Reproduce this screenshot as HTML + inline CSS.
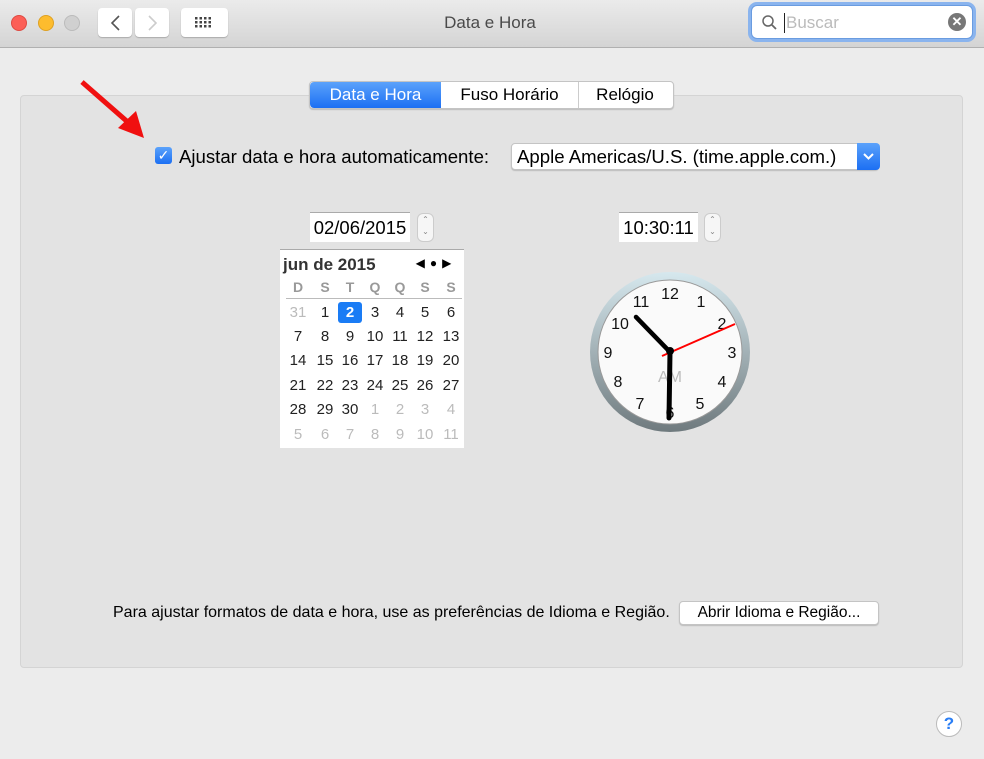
<!DOCTYPE html>
<html><head><style>
body{margin:0;width:984px;height:759px;background:#ececec;font-family:"Liberation Sans",sans-serif;position:relative;overflow:hidden}
.a{position:absolute}
.tb{left:0;top:0;width:984px;height:47px;background:linear-gradient(#ebebeb,#d4d4d4);border-bottom:1px solid #b0b0b0}
.dot{width:14px;height:14px;border-radius:50%;top:15px}
.btn{background:#fff;border-radius:4px;box-shadow:0 1px 1px #aaa;top:8px;height:29px}
.panel{left:20px;top:95px;width:941px;height:571px;background:#e3e3e3;border:1px solid #d4d4d4;border-radius:4px}
.cal div{position:absolute;width:24px;text-align:center;font-size:14px}
.h{color:#999;font-weight:bold}
</style></head><body>
<div class="a tb"></div>
<div class="a dot" style="left:11px;background:#fc5f57;border:1px solid #de4a42"></div>
<div class="a dot" style="left:38px;background:#fdbc2e;border:1px solid #dea123"></div>
<div class="a dot" style="left:64px;background:#d0d0d0;border:1px solid #bbb"></div>
<div class="a btn" style="left:98px;width:34px"></div>
<div class="a btn" style="left:135px;width:34px"></div>
<svg class="a" style="left:98px;top:8px" width="72" height="29"><path d="M21 8 L14 15 L21 22" stroke="#555" stroke-width="1.6" fill="none"/><path d="M51 8 L58 15 L51 22" stroke="#ccc" stroke-width="1.6" fill="none"/></svg>
<div class="a btn" style="left:181px;width:47px"></div>
<svg class="a" style="left:195px;top:17px" width="20" height="12"><g fill="#444"><rect x="0" y="0" width="2.5" height="2.5"/><rect x="4.5" y="0" width="2.5" height="2.5"/><rect x="9" y="0" width="2.5" height="2.5"/><rect x="13.5" y="0" width="2.5" height="2.5"/><rect x="0" y="4" width="2.5" height="2.5"/><rect x="4.5" y="4" width="2.5" height="2.5"/><rect x="9" y="4" width="2.5" height="2.5"/><rect x="13.5" y="4" width="2.5" height="2.5"/><rect x="0" y="8" width="2.5" height="2.5"/><rect x="4.5" y="8" width="2.5" height="2.5"/><rect x="9" y="8" width="2.5" height="2.5"/><rect x="13.5" y="8" width="2.5" height="2.5"/></g></svg>
<div class="a" style="left:380px;width:220px;top:13px;text-align:center;font-size:17px;color:#4a4a4a">Data e Hora</div>
<div class="a" style="left:751px;top:5px;width:222px;height:34px;border-radius:6px;background:#fff;box-shadow:0 0 0 3px #8ab4ee;border:1px solid #6a9ce0;box-sizing:border-box"></div>
<svg class="a" style="left:761px;top:14px" width="18" height="18"><circle cx="7" cy="7" r="5" stroke="#666" stroke-width="1.5" fill="none"/><path d="M11 11 L15 15" stroke="#666" stroke-width="1.8"/></svg>
<div class="a" style="left:784px;top:13px;width:1px;height:20px;background:#222"></div>
<div class="a" style="left:786px;top:13px;font-size:17px;color:#bbb">Buscar</div>
<div class="a" style="left:948px;top:13px;width:18px;height:18px;border-radius:50%;background:#777;color:#fff;font-size:13px;line-height:18px;text-align:center;font-weight:bold">✕</div>

<div class="a panel"></div>
<div class="a" style="left:309px;top:81px;width:363px;height:26px;background:#fff;border:1px solid #c4c4c4;border-radius:4px;box-shadow:0 1px 1px #bbb"></div>
<div class="a" style="left:310px;top:82px;width:131px;height:26px;background:linear-gradient(#5ba2fb,#1c6ff3);border-radius:4px 0 0 4px;color:#fff;font-size:17px;line-height:26px;text-align:center">Data e Hora</div>
<div class="a" style="left:441px;top:82px;width:137px;height:26px;border-right:1px solid #ccc;font-size:17px;line-height:26px;text-align:center">Fuso Horário</div>
<div class="a" style="left:579px;top:82px;width:92px;height:26px;font-size:17px;line-height:26px;text-align:center">Relógio</div>

<svg class="a" style="left:78px;top:78px" width="80" height="65"><path d="M4 4 L52 46" stroke="#f01010" stroke-width="5"/><path d="M40 50 L66 60 L58 33 Z" fill="#f01010"/></svg>
<div class="a" style="left:155px;top:147px;width:17px;height:17px;border-radius:3px;background:linear-gradient(#5ba2fb,#1c6ff3);color:#fff;font-size:14px;line-height:17px;text-align:center">✓</div>
<div class="a" style="left:179px;top:146px;font-size:18.6px">Ajustar data e hora automaticamente:</div>
<div class="a" style="left:511px;top:143px;width:368px;height:27px;background:#fff;border:1px solid #c4c4c4;border-radius:4px;box-sizing:border-box;box-shadow:0 1px 1px #bbb"></div>
<div class="a" style="left:517px;top:146px;font-size:18.6px">Apple Americas/U.S. (time.apple.com.)</div>
<div class="a" style="left:857px;top:143px;width:23px;height:27px;background:linear-gradient(#5ba2fb,#1c6ff3);border-radius:0 4px 4px 0"></div>
<svg class="a" style="left:861px;top:150px" width="15" height="12"><path d="M3 4 L7.5 8.5 L12 4" stroke="#fff" stroke-width="2" fill="none"/></svg>

<div class="a" style="left:310px;top:212px;width:100px;height:29px;background:#fff;border-top:1px solid #aaa;font-size:18.5px;line-height:29px;text-align:center">02/06/2015</div>
<div class="a" style="left:417px;top:213px;width:15px;height:27px;border-radius:6px;background:#f6f6f6;border:1px solid #ccc;color:#888;font-size:8px;text-align:center;line-height:12px">⌃<br>⌄</div>
<div class="a" style="left:619px;top:212px;width:79px;height:29px;background:#fff;border-top:1px solid #aaa;font-size:18.5px;line-height:29px;text-align:center">10:30:11</div>
<div class="a" style="left:704px;top:213px;width:15px;height:27px;border-radius:6px;background:#f6f6f6;border:1px solid #ccc;color:#888;font-size:8px;text-align:center;line-height:12px">⌃<br>⌄</div>

<div class="a cal" style="left:280px;top:249px;width:184px;height:198px;background:#fff;border-top:1px solid #aaa">
<div style="left:3px;top:5px;width:110px;text-align:left;font-weight:bold;font-size:17px;color:#333">jun de 2015</div>
<div style="left:128px;top:6px;width:56px;font-size:12px;letter-spacing:5px">◀●▶</div>
<div style="position:absolute;left:6px;top:48px;width:176px;height:1px;background:#bbb"></div>
</div>
<div id="c"></div>
<script>
var cx=[298,325,350,375,400,425,451],ry=[288,312,336,360,385,409,434];
var h=['D','S','T','Q','Q','S','S'],o='';
h.forEach((t,i)=>o+=`<div class="a h" style="left:${cx[i]-12}px;top:${ry[0]-9}px;width:24px;text-align:center;font-size:14px">${t}</div>`);
var cells=[];cells.push([31,1]);for(var i=1;i<=30;i++)cells.push([i,0]);for(var i=1;i<=11;i++)cells.push([i,1]);
cells.forEach((c,k)=>{var col=k%7,row=Math.floor(k/7)+1;var st=c[1]?'color:#bbb':'color:#222';if(!c[1]&&c[0]==2)st='color:#fff;font-weight:bold;background:#1a7cf5;border-radius:3px';
o+=`<div class="a" style="left:${cx[col]-12}px;top:${ry[row]-10}px;width:24px;height:21px;line-height:21px;text-align:center;font-size:15px;${st}">${c[0]}</div>`});
document.getElementById('c').innerHTML=o;
</script>

<svg class="a" style="left:588px;top:270px" width="164" height="164">
<defs><linearGradient id="r" x1="0" y1="0" x2="0" y2="1"><stop offset="0" stop-color="#d6e8ee"/><stop offset="1" stop-color="#6f7a7e"/></linearGradient></defs>
<circle cx="82" cy="82" r="80" fill="url(#r)"/>
<circle cx="82" cy="82" r="72" fill="#fafafa" stroke="#999" stroke-width="1"/>
<g font-family="Liberation Sans" font-size="16" text-anchor="middle" fill="#111">
<text x="82" y="29">12</text><text x="113" y="37">1</text><text x="134" y="59">2</text><text x="144" y="88">3</text><text x="134" y="117">4</text><text x="112" y="139">5</text><text x="82" y="148">6</text><text x="52" y="139">7</text><text x="30" y="117">8</text><text x="20" y="88">9</text><text x="32" y="59">10</text><text x="53" y="37">11</text>
<text x="82" y="112" fill="#bbb">AM</text></g>
<path d="M82 82 L48 47" stroke="#000" stroke-width="4.5" stroke-linecap="round"/>
<path d="M82 82 L81 148" stroke="#000" stroke-width="5" stroke-linecap="round"/>
<path d="M74 86 L147 54" stroke="#f00" stroke-width="2"/>
<circle cx="82" cy="81" r="4" fill="#000"/>
</svg>

<div class="a" style="left:113px;top:604px;font-size:16px">Para ajustar formatos de data e hora, use as preferências de Idioma e Região.</div>
<div class="a" style="left:679px;top:601px;width:200px;height:24px;background:#fff;border:1px solid #c4c4c4;border-radius:4px;box-sizing:border-box;font-size:15.5px;line-height:22px;text-align:center;box-shadow:0 1px 1px #bbb">Abrir Idioma e Região...</div>
<div class="a" style="left:936px;top:711px;width:26px;height:26px;border-radius:50%;background:#fff;border:1px solid #bbb;box-sizing:border-box;color:#2a7ef5;font-size:17px;line-height:24px;text-align:center;font-weight:bold">?</div>
</body></html>
